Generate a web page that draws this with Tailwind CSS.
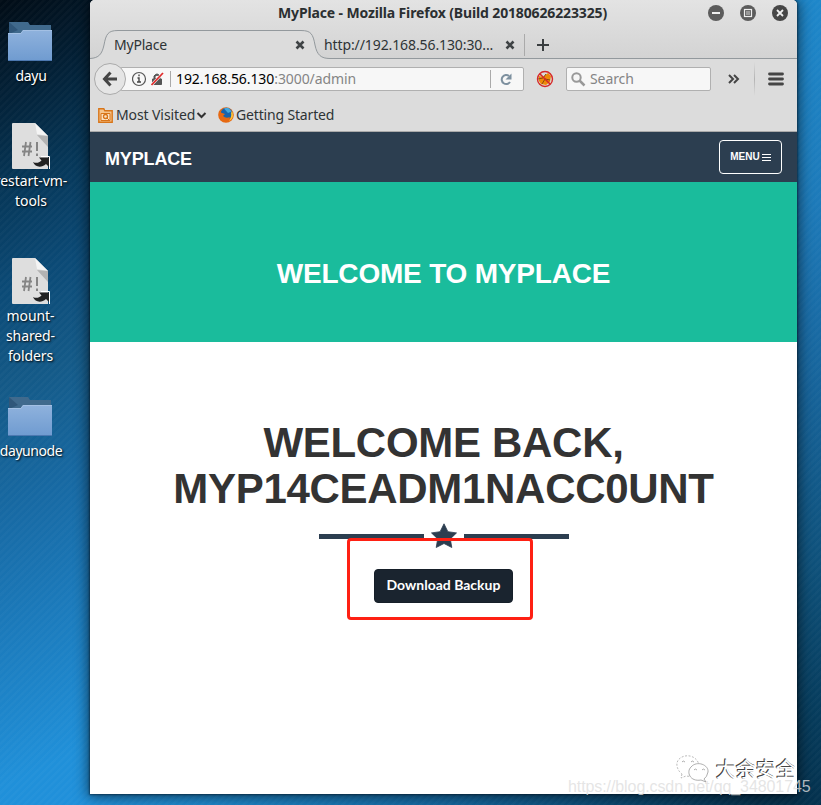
<!DOCTYPE html>
<html lang="en">
<head>
<meta charset="utf-8">
<title>MyPlace</title>
<script src="https://cdn.jsdelivr.net/npm/@tailwindcss/browser@4"></script>
</head>
<body class="w-[821px] h-[805px] overflow-hidden">
<svg width="0" height="0" class="absolute">
  <defs>
    <linearGradient id="fold" x1="0" y1="0" x2="0" y2="1"><stop offset="0" stop-color="#8fb2dd"/><stop offset="1" stop-color="#6f9bd0"/></linearGradient>
    <symbol id="folder" viewBox="0 0 44 41">
      <path d="M1 1h19l2 3h21v20H1z" fill="#406a8d"/><path d="M1 1l9 8-9 4z" fill="#30577a"/>
      <path d="M0 12h13l2-3h29v31H0z" fill="url(#fold)"/><path d="M0 12.500h13l2-3h29" fill="none" stroke="#a3c0e4"/><path d="M0 39.500h44" stroke="#4c78b0"/>
    </symbol>
    <symbol id="script" viewBox="0 0 38 46">
      <path d="M1 0h22l13 13v33H1a1 1 0 0 1-1-1V1a1 1 0 0 1 1-1z" fill="#dedede"/>
      <path d="M23 0l13 13-11-2z" fill="#f4f4f4"/><path d="M25 12l11 1v11z" fill="#b3b3b3"/>
      <path d="M14 19l-2 14M18.500 19l-2 14M10 23.500h10M10 28.500h10" stroke="#858585" stroke-width="1.800" fill="none"/>
      <path d="M25 19v9M25 30.500v2.500" stroke="#858585" stroke-width="2"/>
      <path d="M29 33.500h8.500v12.500" stroke="#fff" fill="none"/>
      <path d="M21 39c3 1.500 6 1 8.500-1.500L27 34.500h10V44l-3-3c-5 4.500-11 3-13-2z" fill="#222"/>
    </symbol>
  </defs>
</svg>
<main class="relative w-[821px] h-[805px] overflow-hidden bg-[linear-gradient(90deg,#2090db_0%,#1d87cb_25%,#13669e_55%,#073f63_80%,#04263d_100%)] font-['Noto_Sans','Open_Sans',sans-serif] text-sm">
  <div class="flex justify-between h-[805px]">
    <aside class="w-[110px] bg-[linear-gradient(155deg,#010c16_0%,#032239_12%,#063657_22%,#0b4a76_34%,#145a88_46%,#1769a3_60%,#1b7abb_74%,#2090d9_92%,#2090db_100%)]"></aside>
    <aside class="w-[60px] bg-[linear-gradient(194deg,#1e87ca_0%,#1d7ab9_25%,#17649b_47%,#0e5079_70%,#063b5b_88%,#04304c_100%)]"></aside>
  </div>
  <div class="absolute inset-0 bg-[repeating-linear-gradient(135deg,rgba(255,255,255,0.022)_0px,rgba(255,255,255,0.022)_2px,transparent_3px,transparent_5px)]"></div>

  <nav class="absolute left-[-15px] top-0 w-[90px] flex flex-col items-center text-center text-white leading-5 [text-shadow:1px_1px_2px_#000]">
    <div class="pt-[21px] h-[123px] w-full flex flex-col items-center"><svg class="w-11 h-[41px]"><use href="#folder"/></svg><span class="pt-[4px] pl-[2px] tracking-[-0.3px]">dayu</span></div>
    <div class="h-[135px] w-full flex flex-col items-center"><svg class="w-[38px] h-[46px] ml-[2px]"><use href="#script"/></svg><span class="pt-[2px] pl-[2px] whitespace-nowrap tracking-[-0.05px]">restart-vm-<br>tools</span></div>
    <div class="h-[138px] w-full flex flex-col items-center"><svg class="w-[38px] h-[46px] ml-[2px]"><use href="#script"/></svg><span class="pt-[2px] pl-[1px] tracking-[-0.1px]">mount-<br>shared-<br>folders</span></div>
    <div class="w-full flex flex-col items-center"><svg class="w-11 h-[41px]"><use href="#folder"/></svg><span class="pt-[4px] pl-[2px] tracking-[-0.45px]">dayunode</span></div>
  </nav>

  <section class="absolute left-[90px] top-0 w-[707px] h-[794px] flex flex-col bg-white rounded-t-[5px] overflow-hidden shadow-[0_1px_14px_2px_rgba(0,0,0,0.55),0_0_2px_1px_rgba(0,15,30,0.45)]">
    <header class="h-[132px] bg-[#dcdcdc] border-b border-[#aaa] text-[#2e3436] flex flex-col shrink-0">
      <div class="h-[59px] bg-linear-to-b from-[#e3e3e3] to-[#d3d3d3] relative">
        <div class="h-[27px] flex items-center pl-[188px] pr-[9px] justify-between">
          <h1 class="font-bold leading-[26px] pb-[2px] whitespace-nowrap tracking-[-0.14px] text-[#2b2f31]">MyPlace - Mozilla Firefox (Build 20180626223325)</h1>
          <svg width="80" height="16" class="mb-[1px]" fill="none" stroke="#eee" stroke-width="1.800"><g stroke="none"><circle cx="8" cy="8" r="8" fill="#5c5c5c"/><circle cx="40" cy="8" r="8" fill="#5c5c5c"/><circle cx="72" cy="8" r="8" fill="#464646"/></g><path d="M4 8h8M69 5l6 6m0-6l-6 6"/><rect x="36.500" y="4.500" width="7" height="7" stroke-width="1.200"/><rect x="38" y="6" width="4" height="4" fill="#999" stroke="none"/></svg>
        </div>
        <div class="relative h-[32px] flex items-center">
          <svg class="absolute left-0 top-[3px]" width="707" height="29" fill="none"><path d="M0 29C9 29 12 24 14 15C16 4 18 1 28 1H211C221 1 223 4 225 15C227 25 231 29 240 29z" fill="#dcdcdc"/><path d="M0 28.500C9 28 12 24 14 15C16 4 18 .5 28 .5H211C221 .5 223 4 225 15C227 25 231 28.500 240 28.500H707" stroke="#93999d"/><path d="M434.500 4v22" stroke="#aaa"/></svg>
          <div class="relative top-[2px] flex items-center w-full h-[34px] pl-6">
            <span class="w-[181px] tracking-[-0.2px]">MyPlace</span>
            <svg width="10" height="10" stroke="#3f4345" stroke-width="2.600"><path d="M1.500 1.500l7 7m0-7l-7 7"/></svg>
            <span class="ml-[19px] w-[181px] whitespace-nowrap tracking-[-0.1px]">http://192.168.56.130:30...</span>
            <svg width="10" height="10" stroke="#3f4345" stroke-width="2.600"><path d="M1.500 1.500l7 7m0-7l-7 7"/></svg>
            <svg class="ml-[22px]" width="12" height="12" stroke="#3a3e40" stroke-width="2"><path d="M6 0v12M0 6h12"/></svg>
          </div>
        </div>
      </div>
      <div class="h-[40px] flex items-center relative">
        <div class="absolute left-1 top-[4px] size-[32px] rounded-full border border-[#aaa] bg-[#e5e5e5] grid place-items-center"><svg width="16" height="16" fill="none" stroke="#454545" stroke-width="3"><path d="M8.500 1.500L2.500 8l6 6.500M3 8h12"/></svg></div>
        <div class="ml-[30px] w-[404px] h-6 bg-[#f7f7f7] border border-[#b0b0b0] rounded-[2px] flex items-center">
          <svg class="ml-[11px]" width="40" height="20" fill="none"><circle cx="7" cy="10" r="6.500" stroke="#555" stroke-width="1.200"/><path d="M7 5.500v1.800M5.500 9H7v4m-2 0h4" stroke="#444" stroke-width="1.400"/><path d="M20.500 10h9v5.500h-9zM22 10V7q3-4 6 0v3" fill="#555" stroke="#555"/><path d="M23.500 9V7.500q1.500-1.500 3 0V9z" fill="#f7f7f7"/><path d="M19.500 16L31 4" stroke="#f7f7f7" stroke-width="2.600"/><path d="M19.500 16L31 4" stroke="#e02b2b" stroke-width="1.800"/><path d="M38.500 2v16" stroke="#aaa"/></svg>
          <span class="ml-[4px] text-black w-[314px] whitespace-nowrap tracking-[-0.08px]">192.168.56.130<span class="text-[#858585]">:3000/admin</span></span>
          <svg width="28" height="20" fill="none"><path d="M.5 1v18" stroke="#aaa"/><path d="M20 13A4.500 4.500 0 1 1 19 7" stroke="#7d909f" stroke-width="2"/><path d="M21.500 4.500v6h-6z" fill="#7d909f"/></svg>
        </div>
        <svg class="ml-[12px]" width="18" height="18" fill="none"><path d="M3 6l4 1 5-4 3 3-1 6-4 3-5-1-2-3z" fill="#ee8908"/><path d="M2 9l5-1 3-4M6 14l3-5 5 1" stroke="#8b490b"/><circle cx="9" cy="9" r="7.500" stroke="#d62828" stroke-width="1.400"/><path d="M4 4l10 10" stroke="#d62828" stroke-width="1.600"/></svg>
        <div class="ml-[12px] w-[145px] h-6 bg-[#f7f7f7] border border-[#b0b0b0] rounded-[2px] flex items-center text-[#858585]"><svg class="ml-1" width="15" height="15" fill="none" stroke="#999"><circle cx="5.500" cy="5.500" r="4.200" stroke-width="2"/><path d="M8.500 8.500l5 5" stroke-width="2.500"/></svg><span class="ml-[4px] tracking-[-0.1px]">Search</span></div>
        <svg class="ml-[17px]" width="12" height="10" fill="none" stroke="#444" stroke-width="2"><path d="M1 1l4 4-4 4M6 1l4 4-4 4"/></svg>
        <div class="ml-[14px] w-px h-[34px] bg-linear-to-b from-transparent via-[#b3b3b3] to-transparent"></div>
        <svg class="ml-[13px]" width="16" height="14" stroke="#454545" stroke-width="2.800" stroke-linecap="round"><path d="M1.500 2h13M1.500 7h13M1.500 12h13"/></svg>
      </div>
      <div class="h-[32px] flex items-center pl-2">
        <svg width="15" height="15" fill="none" stroke="#d87519"><path d="M.8 14.200V.8h5l1 2h7.400v11.400z" fill="#f7c58c" stroke-width="1.400"/><path d="M3 5.500h9v7H3z" fill="#fbe3c6"/><circle cx="7.500" cy="8.500" r="2" stroke-width="1.300"/><path d="M9 10l2 2"/></svg>
        <span class="ml-[3px] w-[80px] whitespace-nowrap tracking-[-0.1px]">Most Visited</span>
        <svg width="11" height="7" fill="none" stroke="#333" stroke-width="2"><path d="M1.500 1l4 4 4-4"/></svg>
        <svg class="ml-[11px]" width="16" height="16"><circle cx="8" cy="8" r="7.800" fill="#e66913"/><circle cx="8.500" cy="6.500" r="5.800" fill="#1764ad"/><path d="M6 1.500q5-2.500 7.500 3L10 6z" fill="#43a8df"/><path d="M1 3q0 2 3 3l3 1-2 2q3 3 7 1-3 6-8 4Q0 11 1 3z" fill="#e66913"/><path d="M14 4q3 7-3 10 3-4 2-8z" fill="#fcc534"/></svg>
        <span class="ml-[2px] whitespace-nowrap tracking-[-0.16px]">Getting Started</span>
      </div>
    </header>
    <div class="h-[50px] shrink-0 bg-[#2c3e50] text-white font-['Liberation_Sans',Arial,sans-serif] font-bold flex items-center justify-between pl-[15px] pr-[15px]">
      <span class="text-lg pt-[3px] tracking-[-0.15px]">MYPLACE</span>
      <button class="w-[63px] h-[34px] border border-white rounded-[4px] text-[10px] flex items-center justify-center gap-[2px] pt-[1px]">MENU <svg width="9" height="9" fill="#fff" shape-rendering="crispEdges"><path d="M0 1h9v1H0zM0 4h9v1H0zM0 7h9v1H0z"/></svg></button>
    </div>
    <div class="h-[160px] shrink-0 bg-[#1abc9c] text-white font-['Liberation_Sans',Arial,sans-serif] font-bold text-[28px] flex justify-center pt-[71px] leading-[42px] tracking-[-0.2px]">WELCOME TO MYPLACE</div>
    <div class="flex flex-col items-center pt-[78px]">
      <h2 class="font-['Liberation_Sans',Arial,sans-serif] font-bold text-[42px] leading-[46px] tracking-[-0.3px] text-[#333] text-center">WELCOME BACK,<br>MYP14CEADM1NACC0UNT</h2>
      <div class="mt-[11px] flex items-center gap-[7px]"><span class="w-[105px] h-[5px] bg-[#2c3e50]"></span><svg width="26" height="26" viewBox="0 0 26 26" fill="#2c3e50"><path d="M13 .8l3.900 7.900 8.600 1.200-6.200 6 1.500 8.600-7.800-4-7.800 4 1.500-8.600-6.200-6 8.600-1.200z" stroke="#2c3e50" stroke-width=".8" stroke-linejoin="round"/></svg><span class="w-[105px] h-[5px] bg-[#2c3e50]"></span></div>
      <button class="mt-[20px] pb-[2px] w-[139px] h-[34px] rounded-[4px] bg-[#1a242f] border border-[#161f29] text-white font-['Lato',sans-serif] font-bold text-sm leading-5">Download Backup</button>
    </div>
  </section>
  <div class="absolute left-[347px] top-[538px] w-[186px] h-[82px] border-[3px] border-[#fe2013] rounded-[4px]"></div>
  <svg class="absolute left-[676px] top-[754px]" width="34" height="29" fill="#fff" stroke="#999" stroke-width=".8"><path stroke-dasharray="2 1.500" stroke="#aaa" d="M6 20l-1 4 5-2C21 24 24 15 22 8 16-3-1 2 1 12q1 5 5 8z"/><path d="M28 25l2 3-5-2C14 28 10 18 15 13c6-7 18-2 17 5q-1 5-4 7z"/><path d="M6 8q1-2 3 0m6 0q1-2 3 0m0 8q1-2 3 0m5 0q1-2 3 0"/></svg>
  <span class="absolute left-[716px] top-[754px] text-[20px] leading-[30px] whitespace-nowrap text-white font-['Noto_Sans_CJK_SC',sans-serif] [text-shadow:-1px_-1px_0_#444,-1px_0_0_#666]">大余安全</span>
  <span class="absolute left-[568px] top-[777px] text-[16px] leading-[20px] whitespace-nowrap tracking-[-0.09px] text-[#dedede]/80 font-['Liberation_Sans',Arial,sans-serif]">https://blog.csdn.net/qq_34801745</span>
</main>
</body>
</html>
